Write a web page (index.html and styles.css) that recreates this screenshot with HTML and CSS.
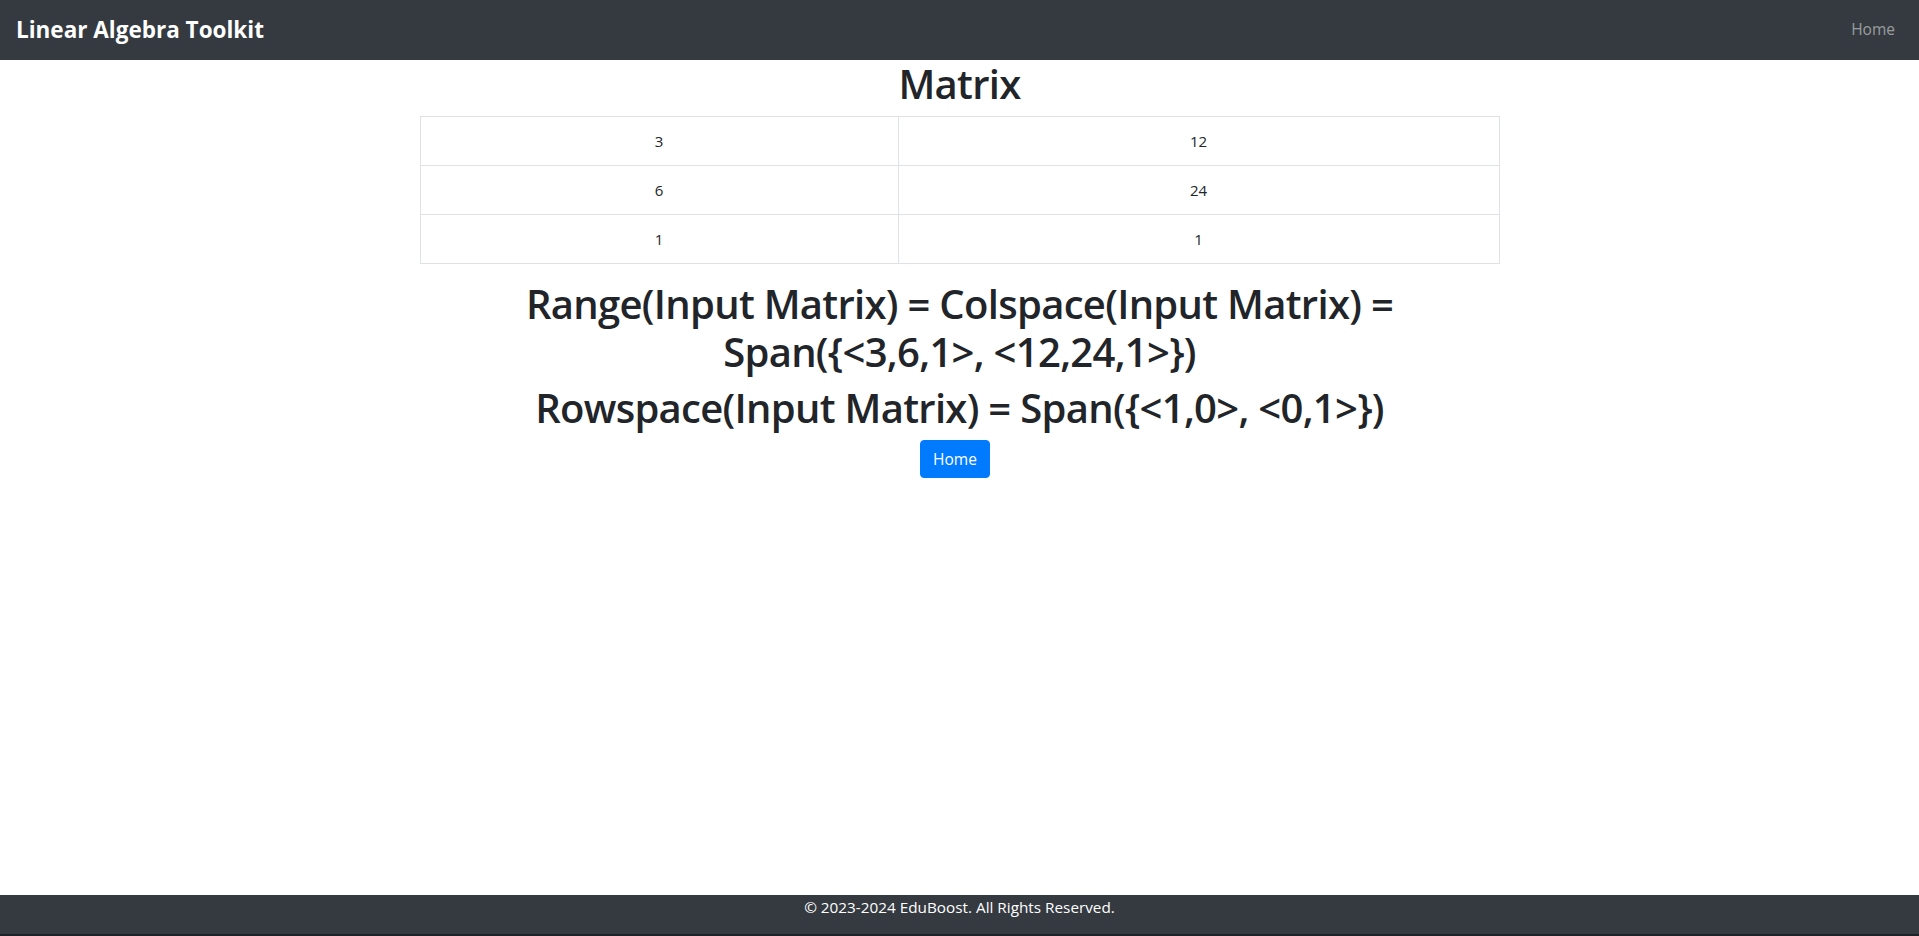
FILE: index.html
```html
<!DOCTYPE html>
<html lang="en">
<head>
<meta charset="utf-8">
<title>Linear Algebra Toolkit</title>
<link rel="stylesheet" href="styles.css">
</head>
<body>
<nav class="navbar">
  <a class="brand" href="#">Linear Algebra Toolkit</a>
  <a class="nav-link" href="#">Home</a>
</nav>
<main class="container">
  <h1 class="title">Matrix</h1>
  <table class="matrix">
    <colgroup><col class="col-a"><col class="col-b"></colgroup>
    <tbody>
      <tr><td>3</td><td>12</td></tr>
      <tr><td>6</td><td>24</td></tr>
      <tr><td>1</td><td>1</td></tr>
    </tbody>
  </table>
  <h1 class="title">Range(Input Matrix) = Colspace(Input Matrix) = Span({&lt;3,6,1&gt;, &lt;12,24,1&gt;})</h1>
  <h1 class="title">Rowspace(Input Matrix) = Span({&lt;1,0&gt;, &lt;0,1&gt;})</h1>
  <a class="btn" href="#">Home</a>
</main>
<footer class="footer">© 2023-2024 EduBoost. All Rights Reserved.</footer>
</body>
</html>
```
FILE: styles.css
```css
html, body { margin: 0; padding: 0; }
body {
  font-family: "Open Sans", "Noto Sans", sans-serif;
  font-size: 16px;
  line-height: 1.5;
  color: #212529;
  background: #fff;
  min-height: 100vh;
  display: flex;
  flex-direction: column;
}
a { text-decoration: none; }

.navbar {
  height: 60px;
  background: #343a40;
  padding: 0 24px 0 16px;
  display: flex;
  align-items: center;
  justify-content: space-between;
  flex-shrink: 0;
}
.brand {
  color: #fff;
  font-weight: 700;
  font-size: 22.5px;
  line-height: 30px;
  padding-bottom: 1px;
}
.nav-link {
  color: rgba(255, 255, 255, 0.5);
  font-size: 15.5px;
  line-height: 24px;
  padding-bottom: 2px;
}

.container {
  width: 1110px;
  margin: 0 auto;
  text-align: center;
}
.title {
  font-size: 40px;
  line-height: 48px;
  font-weight: 600;
  letter-spacing: -0.7px;
  margin: 0 0 8px;
  color: #212529;
}
.matrix {
  width: 1079px;
  margin: 0 auto 16px;
  border-collapse: collapse;
  table-layout: fixed;
}
.col-a { width: 478px; }
.col-b { width: 601px; }
.matrix td {
  border: 1px solid #dee2e6;
  padding: 12px;
  text-align: center;
  font-size: 15px;
  line-height: 24px;
  color: #212529;
}
.btn {
  display: inline-block;
  background: #007bff;
  border: 1px solid #007bff;
  color: #fff;
  border-radius: 4px;
  padding: 6px 12px;
  margin-right: 9px;
  font-size: 15.5px;
  line-height: 24px;
}

.footer {
  margin-top: auto;
  height: 39px;
  background: #343a40;
  border-bottom: 2px solid #1f2226;
  color: #fff;
  text-align: center;
  font-size: 15.3px;
  line-height: 24px;
}
```
